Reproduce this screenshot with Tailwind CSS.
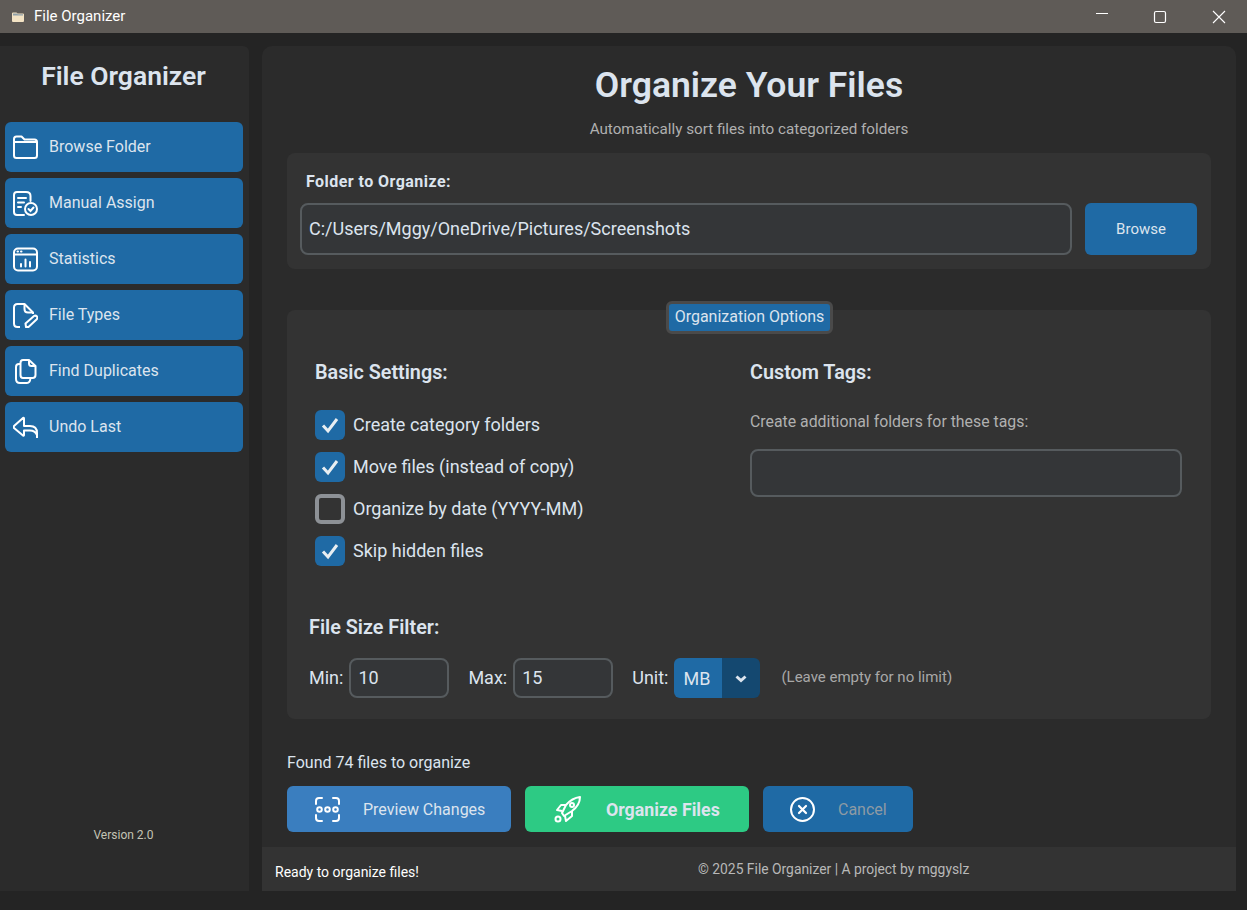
<!DOCTYPE html>
<html lang="en">
<head>
<meta charset="UTF-8">
<title>File Organizer</title>
<script src="https://cdn.jsdelivr.net/npm/@tailwindcss/browser@4"></script>
</head>
<body class="w-[1247px] h-[910px] overflow-hidden bg-[#242424] font-['Roboto',sans-serif] text-[#dce4ee]">
  <!-- title bar -->
  <div class="h-[33px] bg-[#5f5b57] flex items-center text-white">
    <svg class="ml-[12px] w-[12px] h-[12px]" viewBox="0 0 12 12"><path d="M0 2.500Q0 1.500 1 1.500H4.500L5.500 2.500H11Q12 2.500 12 3.500V10Q12 11 11 11H1Q0 11 0 10Z" fill="#f3e3c4"/><path d="M1 2.500H5L5.700 3.200H11V4.500H1Z" fill="#8fa0a8"/></svg>
    <span class="ml-[10px] text-[15px]">File Organizer</span>
    <div class="ml-auto flex items-center">
      <svg class="w-[14px] h-[14px] mr-[44px]" viewBox="0 0 14 14"><path d="M1 3.500H13" stroke="#fff" stroke-width="1"/></svg>
      <svg class="w-[14px] h-[14px] mr-[45px]" viewBox="0 0 14 14"><rect x="1.500" y="1.500" width="11" height="11" rx="1.500" fill="none" stroke="#fff" stroke-width="1.200"/></svg>
      <svg class="w-[14px] h-[14px] mr-[21px]" viewBox="0 0 14 14"><path d="M1 1L13 13M13 1L1 13" stroke="#fff" stroke-width="1.100"/></svg>
    </div>
  </div>

  <div class="flex h-[845px] mt-[13px]">
    <!-- sidebar -->
    <aside class="w-[249px] bg-[#2b2b2b] rounded-tr-[6px] flex flex-col">
      <h1 class="text-[26.500px] leading-[28px] font-semibold text-center mt-[16px] pr-[2px]">File Organizer</h1>
      <nav class="mt-[32px] ml-[5px] w-[238px] flex flex-col gap-[6px] text-[16px]">
        <a class="h-[50px] bg-[#1f6aa5] rounded-[6px] flex items-center">
          <svg class="ml-[8px] w-[25px] h-[25px]" viewBox="0 0 25 25" fill="none" stroke="#fff" stroke-width="2" stroke-linejoin="round"><path d="M1 6.500V4Q1 1.500 3.500 1.500H8.500L11.500 4.500H21.500Q24 4.500 24 7V20.500Q24 23 21.500 23H3.500Q1 23 1 20.500V7H24"/></svg>
          <span class="ml-[11px]">Browse Folder</span>
        </a>
        <a class="h-[50px] bg-[#1f6aa5] rounded-[6px] flex items-center">
          <svg class="ml-[8px] w-[25px] h-[25px]" viewBox="0 0 25 25" fill="none" stroke="#fff" stroke-width="2" stroke-linecap="round"><path d="M11 24H4Q1 24 1 21V4Q1 1 4 1H13Q17.500 1 17.500 5V10"/><path d="M5 7H13M5 11.500H11M5 16H8"/><circle cx="18" cy="18" r="6"/><path d="M15.500 18L17.500 20L20.500 16.500"/></svg>
          <span class="ml-[11px]">Manual Assign</span>
        </a>
        <a class="h-[50px] bg-[#1f6aa5] rounded-[6px] flex items-center">
          <svg class="ml-[8px] w-[25px] h-[25px]" viewBox="0 0 25 25" fill="none" stroke="#fff" stroke-width="2" stroke-linecap="round"><rect x="1" y="1.500" width="23" height="22" rx="4"/><path d="M1 7.500H24"/><path d="M4.500 4.500H5M8 4.500H8.500" stroke-width="2"/><path d="M8 19.500V17M12.500 19.500V12.500M17 19.500V15"/></svg>
          <span class="ml-[11px]">Statistics</span>
        </a>
        <a class="h-[50px] bg-[#1f6aa5] rounded-[6px] flex items-center">
          <svg class="ml-[8px] w-[25px] h-[25px]" viewBox="0 0 25 25" fill="none" stroke="#fff" stroke-width="2" stroke-linejoin="round"><path d="M7 24H4.500Q1 24 1 20.500V4.500Q1 1 4.500 1H11.500L20 9.500V11"/><path d="M11.500 1V6Q11.500 9.500 15 9.500H20"/><path d="M13 24L12.500 20.500L21 13Q22.500 12 24 13.500Q25 15 23.500 16.500L15.500 24Z"/></svg>
          <span class="ml-[11px]">File Types</span>
        </a>
        <a class="h-[50px] bg-[#1f6aa5] rounded-[6px] flex items-center">
          <svg class="ml-[10px] w-[22px] h-[25px]" viewBox="0 0 22 25" fill="none" stroke="#fff" stroke-width="2" stroke-linejoin="round"><path d="M8 1H14L20.500 7V16Q20.500 19 17.500 19H8Q5.500 19 5.500 16V4Q5.500 1 8 1Z"/><path d="M14 1V4.500Q14 7 16.500 7H20.500"/><path d="M5.500 5H4Q1 5 1 8V20Q1 24 5 24H12Q15 24 15.500 19"/></svg>
          <span class="ml-[12px]">Find Duplicates</span>
        </a>
        <a class="h-[50px] bg-[#1f6aa5] rounded-[6px] flex items-center">
          <svg class="ml-[8px] w-[25px] h-[24px]" viewBox="0 0 25 24" fill="none" stroke="#fff" stroke-width="2" stroke-linejoin="round"><path d="M24 23V18Q24 11 17 11H11V3.500Q11 2.500 10 3L1 11Q0.500 12 1 13L10 20.500Q11 21 11 20V15.500H17Q22 15.500 24 20"/></svg>
          <span class="ml-[11px]">Undo Last</span>
        </a>
      </nav>
      <div class="mt-auto mb-[49px] text-center text-[12px] leading-[14px] text-[#c4c4b4] pr-[2px]">Version 2.0</div>
    </aside>

    <!-- main -->
    <main class="ml-[13px] w-[974px] bg-[#2b2b2b] rounded-t-[10px] flex flex-col">
      <div class="flex-1 px-[25px]">
        <h2 class="mt-[20px] text-[35.500px] leading-[38px] font-semibold text-center">Organize Your Files</h2>
        <p class="mt-[17px] text-[15.200px] leading-[16px] text-center text-[#b0b0b0]">Automatically sort files into categorized folders</p>

        <section class="mt-[16px] h-[116px] bg-[#333333] rounded-[8px] pt-[20px] px-[13px]">
          <div class="ml-[6px] text-[16px] leading-[18px] font-bold tracking-[0.45px]">Folder to Organize:</div>
          <div class="mt-[12px] flex gap-[13px]">
            <div class="w-[772px] h-[52px] bg-[#343638] border-2 border-[#565b5e] rounded-[8px] flex items-center pl-[7px] pb-[2px] text-[18px]">C:/Users/Mggy/OneDrive/Pictures/Screenshots</div>
            <button class="w-[112px] h-[52px] bg-[#1f6aa5] rounded-[6px] text-[15px]">Browse</button>
          </div>
        </section>

        <section class="relative mt-[41px] h-[409px] bg-[#333333] rounded-[8px]">
          <div class="absolute left-[379px] top-[-9px] h-[33px] w-[167px] border-[3px] border-[#4a4a4a] rounded-[6px] bg-[#1f6aa5] text-[16px] pb-[2px] flex items-center justify-center">Organization Options</div>
          <div class="flex pt-[52px]">
            <div class="ml-[28px] w-[435px]">
              <h3 class="text-[19.800px] leading-[21px] font-semibold">Basic Settings:</h3>
              <div class="mt-[27px] flex flex-col gap-[12px] text-[18px]">
                <label class="h-[30px] flex items-center gap-[8px]">
                  <span class="w-[30px] h-[30px] bg-[#1f6aa5] rounded-[6px] flex items-center justify-center"><svg class="w-[18px] h-[18px]" viewBox="0 0 18 18" fill="none" stroke="#e8eef2" stroke-width="3"><path d="M2 9.500L7 15L16 3"/></svg></span>
                  <span class="mb-[2px]">Create category folders</span>
                </label>
                <label class="h-[30px] flex items-center gap-[8px]">
                  <span class="w-[30px] h-[30px] bg-[#1f6aa5] rounded-[6px] flex items-center justify-center"><svg class="w-[18px] h-[18px]" viewBox="0 0 18 18" fill="none" stroke="#e8eef2" stroke-width="3"><path d="M2 9.500L7 15L16 3"/></svg></span>
                  <span class="mb-[2px]">Move files (instead of copy)</span>
                </label>
                <label class="h-[30px] flex items-center gap-[8px]">
                  <span class="w-[30px] h-[30px] border-[4px] border-[#8d9196] rounded-[6px]"></span>
                  <span class="mb-[2px]">Organize by date (YYYY-MM)</span>
                </label>
                <label class="h-[30px] flex items-center gap-[8px]">
                  <span class="w-[30px] h-[30px] bg-[#1f6aa5] rounded-[6px] flex items-center justify-center"><svg class="w-[18px] h-[18px]" viewBox="0 0 18 18" fill="none" stroke="#e8eef2" stroke-width="3"><path d="M2 9.500L7 15L16 3"/></svg></span>
                  <span class="mb-[2px]">Skip hidden files</span>
                </label>
              </div>
            </div>
            <div class="w-[432px]">
              <h3 class="text-[19.800px] leading-[21px] font-semibold">Custom Tags:</h3>
              <p class="mt-[29px] text-[15.850px] leading-[19px] text-[#b0b0b0]">Create additional folders for these tags:</p>
              <div class="mt-[18px] h-[48px] bg-[#343638] border-2 border-[#565b5e] rounded-[8px]"></div>
            </div>
          </div>

          <h3 class="mt-[51px] ml-[22px] text-[19.800px] leading-[21px] font-semibold">File Size Filter:</h3>
          <div class="mt-[20px] ml-[22px] h-[40px] flex items-center text-[18px]">
            <span class="mb-[2px]">Min:</span>
            <div class="ml-[6px] w-[100px] h-[40px] bg-[#343638] border-2 border-[#565b5e] rounded-[8px] flex items-center pl-[7px] pb-[2px]">10</div>
            <span class="ml-[19px] mb-[2px]">Max:</span>
            <div class="ml-[6px] w-[100px] h-[40px] bg-[#343638] border-2 border-[#565b5e] rounded-[8px] flex items-center pl-[7px] pb-[2px]">15</div>
            <span class="ml-[19px] mb-[2px]">Unit:</span>
            <div class="ml-[6px] w-[86px] h-[40px] rounded-[6px] overflow-hidden flex">
              <div class="w-[48px] bg-[#1f6aa5] flex items-center pl-[9px]">MB</div>
              <div class="w-[38px] bg-[#144870] flex items-center justify-center"><svg class="mt-[2px] w-[12px] h-[8px]" viewBox="0 0 12 8" fill="none" stroke="#dce4ee" stroke-width="3"><path d="M1.500 1.500L6 5.500L10.500 1.500"/></svg></div>
            </div>
            <span class="ml-[21px] mb-[2px] text-[15px] text-[#a8a8a8]">(Leave empty for no limit)</span>
          </div>
        </section>

        <p class="mt-[34px] text-[16px] leading-[19px]">Found 74 files to organize</p>
        <div class="mt-[14px] flex gap-[14px]">
          <button class="w-[224px] h-[46px] bg-[#3a7ebf] rounded-[6px] flex items-center text-[16px] text-[#dce4ee]">
            <svg class="ml-[28px] w-[25px] h-[25px]" viewBox="0 0 25 25" fill="none" stroke="#fff" stroke-width="2" stroke-linecap="round"><path d="M1 7V4Q1 1 4 1H7M18 1H21Q24 1 24 4V7M1 18V21Q1 24 4 24H7M18 24H21Q24 24 24 21V18"/><circle cx="4.500" cy="12.500" r="2.300"/><circle cx="12.500" cy="12.500" r="2.300"/><circle cx="20.500" cy="12.500" r="2.300"/></svg>
            <span class="ml-[23px] mt-[2px]">Preview Changes</span>
          </button>
          <button class="w-[224px] h-[46px] bg-[#2dca84] rounded-[6px] flex items-center text-[17.800px] font-bold text-[#dce4ee]">
            <svg class="ml-[29px] w-[27px] h-[27px]" viewBox="0 0 27 27" fill="none" stroke="#fff" stroke-width="2" stroke-linejoin="round"><path d="M8 17L12 9Q18 2 26 1Q26 9 18 15L10 20Z"/><circle cx="18" cy="9" r="2"/><path d="M12 9H7L3 14L8 15M18 15V20L12 25L11 20"/><circle cx="4" cy="23" r="2.500"/></svg>
            <span class="ml-[25px] mt-[2px]">Organize Files</span>
          </button>
          <button class="w-[150px] h-[46px] bg-[#1f6aa5] rounded-[6px] flex items-center text-[16px] text-[#8e9aa4]">
            <svg class="ml-[27px] w-[25px] h-[25px]" viewBox="0 0 25 25" fill="none" stroke="#fff" stroke-width="2" stroke-linecap="round"><circle cx="12.500" cy="12.500" r="11.500"/><path d="M9 9L16 16M16 9L9 16" stroke-width="2.200"/></svg>
            <span class="ml-[23px] mt-[2px]">Cancel</span>
          </button>
        </div>
      </div>

      <footer class="relative h-[44px] bg-[#333333] text-[14px]">
        <span class="absolute left-[13px] top-[17px] leading-[16px] text-white">Ready to organize files!</span>
        <span class="absolute left-[436px] top-[14px] text-[13.850px] leading-[16px] text-[#b8b8b8]">© 2025 File Organizer | A project by mggyslz</span>
      </footer>
    </main>
  </div>
</body>
</html>
